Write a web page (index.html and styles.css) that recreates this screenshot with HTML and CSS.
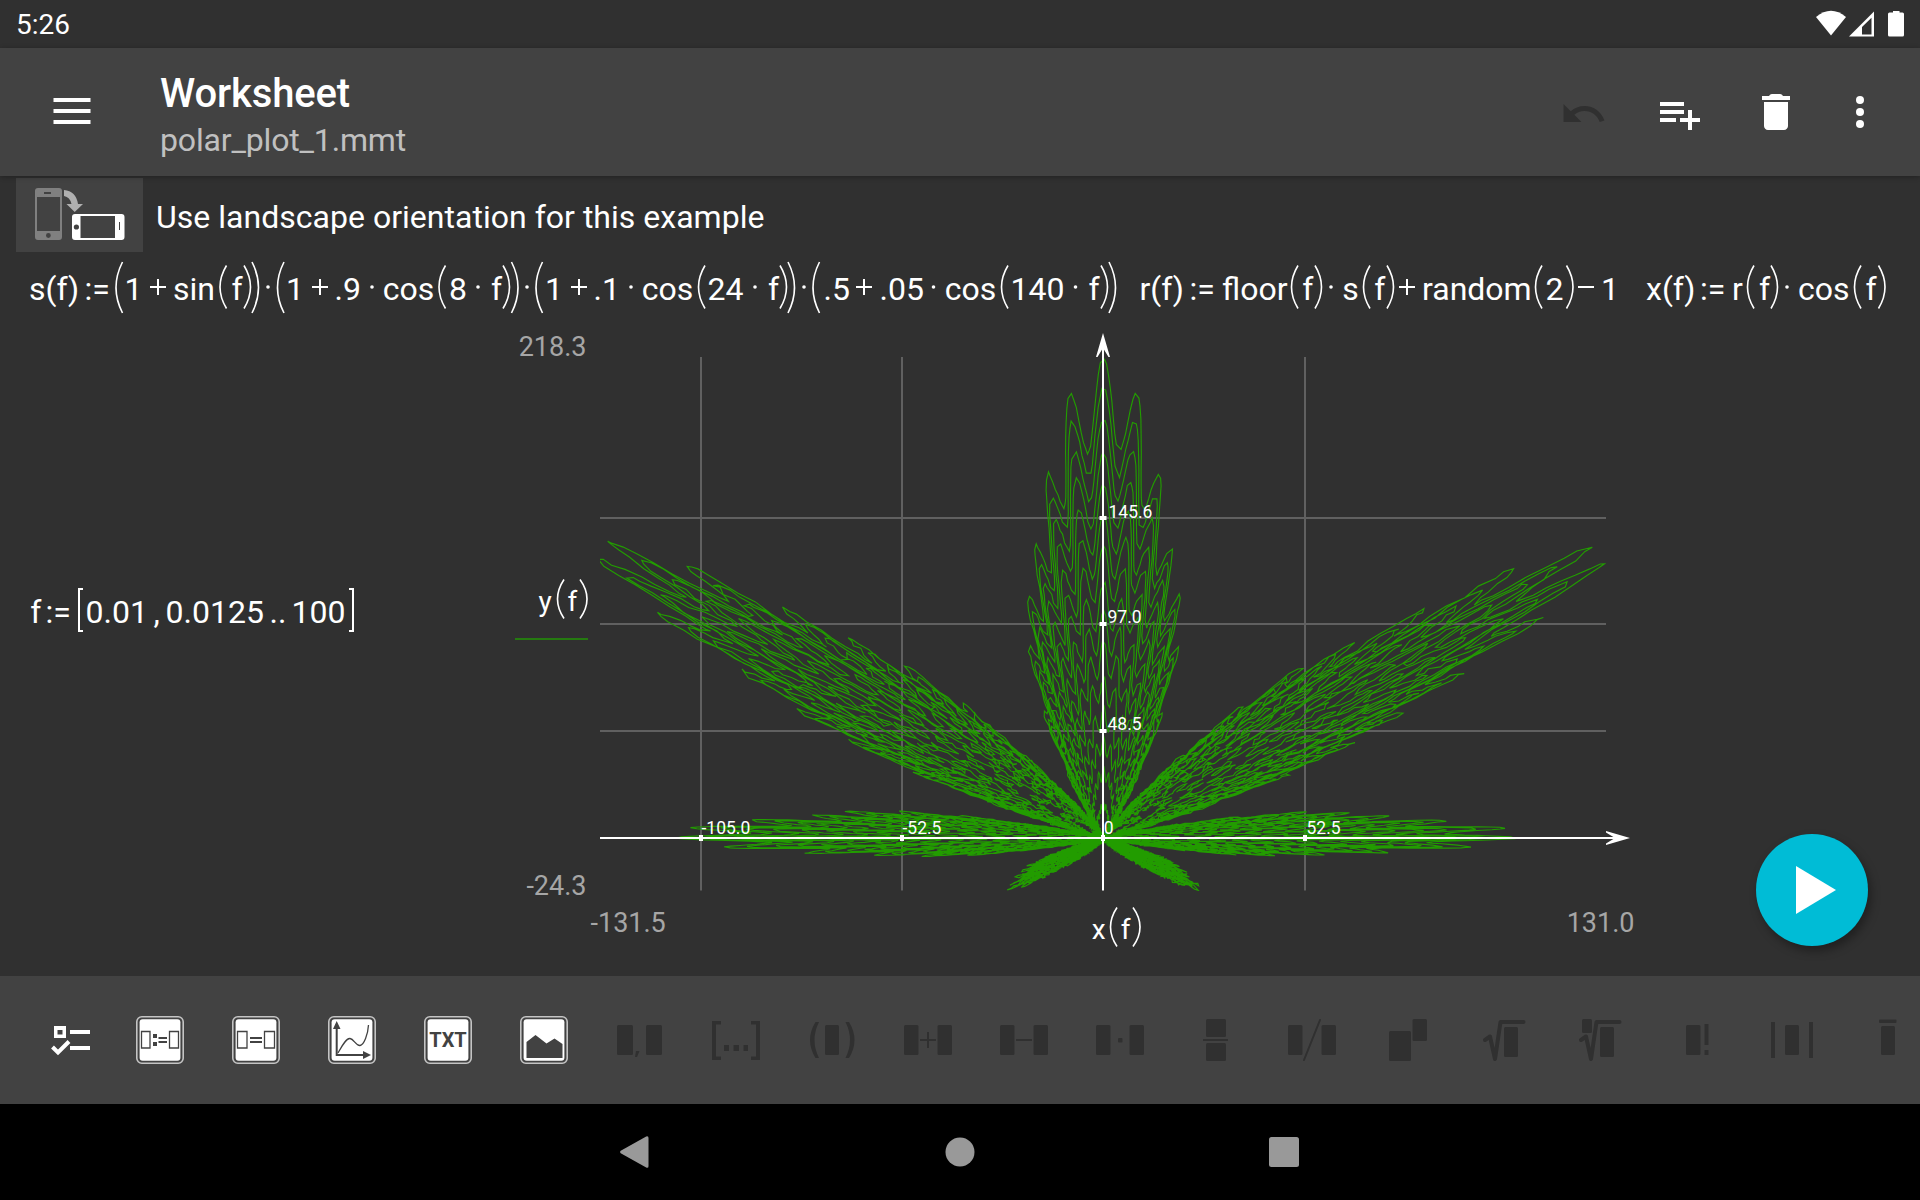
FILE: index.html
```
<!DOCTYPE html>
<html lang="en">
<head>
<meta charset="utf-8">
<title>Worksheet</title>
<link rel="stylesheet" href="styles.css">
</head>
<body>
<div class="screen">
  <div class="status-bar">
    <span class="clock">5:26</span>
    <svg class="status-icons" viewBox="0 0 90 28" width="90" height="28">
      <path d="M0 7Q15-5.500 30 7L15 25.500z"/>
      <path d="M33 26.500L58 1.500V26.500zM46 24.500H55.500V7.800L46 17z" fill-rule="evenodd"/>
      <path d="M74 2.500H77V1H83.500V2.500H86.500Q88 2.500 88 4V25Q88 26.500 86.500 26.500H73.500Q72 26.500 72 25V4Q72 2.500 73.500 2.500z"/>
    </svg>
  </div>

  <header class="app-bar">
    <svg class="menu-icon" viewBox="0 0 38 26" width="38" height="26"><path d="M.500 0h37v4h-37zM.500 11h37v4h-37zM.500 22h37v4h-37z"/></svg>
    <div class="titles">
      <h1 class="title">Worksheet</h1>
      <div class="subtitle">polar_plot_1.mmt</div>
    </div>
    <svg class="actions" viewBox="1550 48 370 128" width="370" height="128">
      <path class="disabled" transform="translate(1559.500 90) scale(2)" d="M12.5 8c-2.650 0-5.050.990-6.900 2.600L2 7v9h9l-3.620-3.620c1.390-1.160 3.160-1.880 5.120-1.880 3.540 0 6.550 2.310 7.600 5.500l2.370-.780C21.080 11.030 17.150 8 12.500 8z"/>
      <path transform="translate(1656 90) scale(2)" d="M14 10H2v2h12v-2zm0-4H2v2h12V6zm4 8v-4h-2v4h-4v2h4v4h2v-4h4v-2h-4zM2 16h8v-2H2v2z"/>
      <path transform="translate(1752 88) scale(2)" d="M6 19c0 1.100.900 2 2 2h8c1.100 0 2-.900 2-2V7H6v12zM19 4h-3.500l-.500-.600Q14.600 3 14 3h-4Q9.400 3 9 3.400L8.500 4H5v2h14V4z"/>
      <circle cx="1860" cy="100" r="4"/><circle cx="1860" cy="112" r="4"/><circle cx="1860" cy="124" r="4"/>
    </svg>
  </header>

  <main class="sheet">
    <div class="note">
      <svg class="note-image" viewBox="16 178 127 74" width="127" height="74">
        <path fill="#808080" fill-rule="evenodd" d="M38 188h21q3 0 3 3v46q0 3-3 3H38q-3 0-3-3v-46q0-3 3-3zM37 197v34h23v-34zM44 192v2h7v-2zM46 235.500a2.400 2.400 0 1 0 4.800 0a2.400 2.400 0 1 0-4.800 0z"/>
        <path fill="#b0b0b0" d="M64 190Q76 191 78 204H83L74.700 212L66.500 204H71.500Q70 197 64 196z"/>
        <path fill="#fff" fill-rule="evenodd" d="M75 214h46.500q3 0 3 3v20q0 3-3 3H75q-3 0-3-3v-20q0-3 3-3zM80.500 216v22H115v-22zM119 222v8h1v-8zM73.800 227a2.600 2.600 0 1 0 5.200 0a2.600 2.600 0 1 0-5.200 0z"/>
      </svg>
      <span class="note-text">Use landscape orientation for this example</span>
    </div>

    <svg class="formula" viewBox="0 252 1920 76" width="1920" height="76">
      <defs>
        <path id="lp" d="M7 0Q-6 21.500 7 43"/>
        <path id="rp" d="M0 0Q13 21.500 0 43"/>
        <path id="lb" d="M7 0Q-6 25.500 7 51"/>
        <path id="rb" d="M0 0Q13 25.500 0 51"/>
        <path id="plus" d="M-8 0H8M0-8V8"/>
        <circle id="dot" r="1.800"/>
      </defs>
      <text class="math" y="299.500"><tspan x="29">s(f)</tspan><tspan x="84.500">:=</tspan><tspan x="124.500">1</tspan><tspan x="173">sin</tspan><tspan x="231.500">f</tspan><tspan x="286">1</tspan><tspan x="334.500">.9</tspan><tspan x="382.800">cos</tspan><tspan x="449">8</tspan><tspan x="491">f</tspan><tspan x="545">1</tspan><tspan x="593.500">.1</tspan><tspan x="641.800">cos</tspan><tspan x="707.500">24</tspan><tspan x="768">f</tspan><tspan x="823.500">.5</tspan><tspan x="879.500">.05</tspan><tspan x="944.800">cos</tspan><tspan x="1010.500">140</tspan><tspan x="1088.500">f</tspan></text>
      <text class="math" y="299.500"><tspan x="1139.500">r(f)</tspan><tspan x="1189.500">:=</tspan><tspan x="1222">floor</tspan><tspan x="1302.300">f</tspan><tspan x="1342.300">s</tspan><tspan x="1374.200">f</tspan><tspan x="1422">random</tspan><tspan x="1545.500">2</tspan><tspan x="1601">1</tspan></text>
      <text class="math" y="299.500"><tspan x="1646">x(f)</tspan><tspan x="1700">:=</tspan><tspan x="1732">r</tspan><tspan x="1759">f</tspan><tspan x="1798">cos</tspan><tspan x="1865.500">f</tspan></text>
      <g class="strokes">
        <use href="#lb" x="115.500" y="262"/><use href="#rb" x="252" y="262"/><use href="#lb" x="277" y="262"/><use href="#rb" x="511.500" y="262"/><use href="#lb" x="535.500" y="262"/><use href="#rb" x="788" y="262"/><use href="#lb" x="812.500" y="262"/><use href="#rb" x="1109" y="262"/>
        <use href="#lp" x="219.500" y="265.500"/><use href="#rp" x="244" y="265.500"/><use href="#lp" x="438.500" y="265.500"/><use href="#rp" x="503" y="265.500"/><use href="#lp" x="698" y="265.500"/><use href="#rp" x="780" y="265.500"/><use href="#lp" x="1001" y="265.500"/><use href="#rp" x="1101" y="265.500"/>
        <use href="#lp" x="1291" y="265.500"/><use href="#rp" x="1315" y="265.500"/><use href="#lp" x="1363" y="265.500"/><use href="#rp" x="1387" y="265.500"/><use href="#lp" x="1535" y="265.500"/><use href="#rp" x="1566.500" y="265.500"/>
        <use href="#lp" x="1747" y="265.500"/><use href="#rp" x="1771" y="265.500"/><use href="#lp" x="1854" y="265.500"/><use href="#rp" x="1878.500" y="265.500"/>
      </g>
      <g class="strokes operators">
        <use href="#plus" x="158" y="287"/><use href="#plus" x="320" y="287"/><use href="#plus" x="579" y="287"/><use href="#plus" x="864" y="287"/><use href="#plus" x="1407" y="287"/><path d="M1578 287h16"/>
      </g>
      <g class="dots">
        <use href="#dot" x="268" y="287"/><use href="#dot" x="372" y="287"/><use href="#dot" x="478" y="287"/><use href="#dot" x="527" y="287"/><use href="#dot" x="631" y="287"/><use href="#dot" x="755" y="287"/><use href="#dot" x="804" y="287"/><use href="#dot" x="933.500" y="287"/><use href="#dot" x="1075.500" y="287"/><use href="#dot" x="1331" y="287"/><use href="#dot" x="1787" y="287"/>
      </g>
    </svg>

    <div class="plot-row">
      <svg class="interval" viewBox="0 580 500 60" width="500" height="60">
        <text class="math" y="622.500"><tspan x="30.300">f</tspan><tspan x="45.500">:=</tspan><tspan x="85.500">0.01</tspan><tspan x="153.500">,</tspan><tspan x="165.500">0.0125</tspan><tspan x="269.500">..</tspan><tspan x="291.500">100</tspan></text>
        <path class="strokes operators" d="M83 589H79V631H83M349 589H353V631H349"/>
      </svg>
      <svg class="plot" viewBox="500 328 1160 648" width="1160" height="648">
        <g class="grid"><path d="M701 357V890.500M902 357V890.500M1305 357V890.500M600 518H1606M600 624H1606M600 731H1606"/></g>
        <clipPath id="area"><rect x="600" y="356" width="1006.500" height="535"/></clipPath>
        <path id="curve" class="curve" clip-path="url(#area)"/>
        <path class="axis" d="M1103 345V890.500M600 838H1618"/>
        <path class="marks" d="M1099.500 518h7M1099.500 624h7M1099.500 731h7M701 835v6M902 835v6M1305 835v6M1103 835v6"/>
        <path class="arrow" d="M1103 333L1110 357H1108.500L1103 348L1097.500 357H1096zM1630 838L1606 831V832.500L1615 838L1606 843.500V845z"/>
        <g class="ticks">
          <text x="1108.500" y="517.500">145.6</text><text x="1107.500" y="623">97.0</text><text x="1107.500" y="730">48.5</text>
          <text x="1103.700" y="834">0</text><text x="701.500" y="834">-105.0</text><text x="902.500" y="834">-52.5</text><text x="1306.500" y="834">52.5</text>
        </g>
        <g class="limits">
          <text x="586.500" y="356" text-anchor="end">218.3</text><text x="586.500" y="895" text-anchor="end">-24.3</text>
          <text x="590.500" y="932">-131.5</text><text x="1634.500" y="932" text-anchor="end">131.0</text>
        </g>
        <text class="axis-name" y="611"><tspan x="538.500">y</tspan><tspan x="567.500">f</tspan></text>
        <text class="axis-name" y="938.500"><tspan x="1091.800">x</tspan><tspan x="1120.800">f</tspan></text>
        <path class="strokes" d="M564 579.500Q551 599 564 618.500M580 579.500Q594 599 580 618.500M1117 907.500Q1104 927 1117 946.500M1133 907.500Q1147 927 1133 946.500"/>
        <path class="legend" d="M515 639H588"/>
      </svg>
      <button class="fab" aria-label="Calculate"><svg viewBox="0 0 40 48" width="40" height="48"><path d="M0 0L40 24L0 48z"/></svg></button>
    </div>
  </main>

  <div class="toolbar">
    <svg class="tool" viewBox="40 1016 48 48"><path fill-rule="evenodd" d="M54 1026h12v12H54zM57.500 1030v4.500h5v-4.500zM70 1030h20v4H70zM70 1046h20v4H70z"/><path class="check" d="M52.500 1047L58 1052.500L69 1041.500"/></svg>
    <svg class="tool" viewBox="0 0 48 48"><rect class="frame" x=".800" y=".800" width="46.400" height="46.400" rx="5"/><rect x="3.600" y="3.200" width="40.800" height="41.600" rx="3"/><path class="ink-line" d="M5.500 15.500h8.500v16.500H5.500zM33.500 15.500h9v16.500h-9z"/><path class="ink" d="M17 18h4v4h-4zM17 26h4v4h-4zM22.500 21h8.500v2h-8.500zM22.500 25h8.500v2h-8.500z"/></svg>
    <svg class="tool" viewBox="0 0 48 48"><rect class="frame" x=".800" y=".800" width="46.400" height="46.400" rx="5"/><rect x="3.600" y="3.200" width="40.800" height="41.600" rx="3"/><path class="ink-line" d="M5.500 15.500h9.500v16.500H5.500zM32.500 15.500h10v16.500h-10z"/><path class="ink" d="M18 21h12v2H18zM18 25h12v2H18z"/></svg>
    <svg class="tool" viewBox="0 0 48 48"><rect class="frame" x=".800" y=".800" width="46.400" height="46.400" rx="5"/><rect x="3.600" y="3.200" width="40.800" height="41.600" rx="3"/><path class="ink" d="M8.700 5L12.500 13H9.700V38H35V35L43 39L35 43V40H7.700V13H5z"/><path class="ink-line" d="M10 37C14 30 18 22 22 22.500S28 30 32 29.500S40 18 40.500 9"/></svg>
    <svg class="tool" viewBox="0 0 48 48"><rect class="frame" x=".800" y=".800" width="46.400" height="46.400" rx="5"/><rect x="3.600" y="3.200" width="40.800" height="41.600" rx="3"/><text class="txt" x="24" y="31" text-anchor="middle">TXT</text></svg>
    <svg class="tool" viewBox="0 0 48 48"><rect class="frame" x=".800" y=".800" width="46.400" height="46.400" rx="5"/><rect x="3.600" y="3.200" width="40.800" height="41.600" rx="3"/><path class="ink" d="M6.500 26L15.500 19L26.500 27.500L34.500 22.500L42.500 28V42H6.500z"/></svg>
    <svg class="tool off" viewBox="616 1016 48 48"><rect x="617" y="1025" width="16" height="30" rx="1.500"/><rect x="646" y="1025" width="16" height="30" rx="1.500"/><path d="M636 1051h3.500l-2.500 6h-2z"/></svg>
    <svg class="tool off" viewBox="712 1016 48 48"><path d="M712 1021h9v3.500h-5v32h5v3.500h-9zM760 1021h-9v3.500h5v32h-5v3.500h9zM724 1045h5v6h-5zM733.500 1045h5.500v6h-5.500zM743.500 1045h4.500v6h-4.500z"/></svg>
    <svg class="tool off" viewBox="808 1016 48 48"><path d="M815.500 1022h3.500Q810 1040 819 1058h-3.500Q804.500 1040 815.500 1022zM849 1022h-3.500Q854.500 1040 845.500 1058h3.500Q860 1040 849 1022z"/><rect x="825" y="1025" width="14" height="30" rx="1.500"/></svg>
    <svg class="tool off" viewBox="904 1016 48 48"><rect x="904" y="1025" width="14.500" height="30" rx="1.500"/><rect x="937.500" y="1025" width="14.500" height="30" rx="1.500"/><path d="M920 1039h16v2h-16zM927 1032h2v16h-2z"/></svg>
    <svg class="tool off" viewBox="1000 1016 48 48"><rect x="1000" y="1025" width="14.500" height="30" rx="1.500"/><rect x="1033.500" y="1025" width="14.500" height="30" rx="1.500"/><path d="M1016 1039h16v2h-16z"/></svg>
    <svg class="tool off" viewBox="1096 1016 48 48"><rect x="1096" y="1025" width="14.500" height="30" rx="1.500"/><rect x="1129.500" y="1025" width="14.500" height="30" rx="1.500"/><rect x="1118" y="1038" width="4.500" height="4.500" rx="1"/></svg>
    <svg class="tool off" viewBox="1192 1016 48 48"><rect x="1206" y="1019" width="20" height="18" rx="1.500"/><rect x="1206" y="1043" width="20" height="18" rx="1.500"/><path d="M1203 1039h25v2h-25z"/></svg>
    <svg class="tool off" viewBox="1288 1016 48 48"><rect x="1288" y="1025" width="14.500" height="30" rx="1.500"/><rect x="1321.500" y="1025" width="14.500" height="30" rx="1.500"/><path class="off-line thin" d="M1304 1060L1320 1020"/></svg>
    <svg class="tool off" viewBox="1384 1016 48 48"><rect x="1389" y="1031" width="22" height="30" rx="1.500"/><rect x="1412.500" y="1019" width="14.500" height="22" rx="1.500"/></svg>
    <svg class="tool off" viewBox="1480 1016 48 48"><path class="off-line" d="M1485 1040L1490 1036.500L1495 1059L1500.500 1022H1523.500"/><rect x="1504" y="1027" width="14" height="30" rx="1.500"/></svg>
    <svg class="tool off" viewBox="1576 1016 48 48"><path class="off-line" d="M1581 1040L1586 1036.500L1591 1059L1596.500 1022H1619.500"/><rect x="1600" y="1027" width="14" height="30" rx="1.500"/><rect x="1582" y="1019" width="10" height="14" rx="1.500"/></svg>
    <svg class="tool off" viewBox="1672 1016 48 48"><rect x="1686" y="1025" width="14.500" height="30" rx="1.500"/><path d="M1704.500 1024h4v21h-4zM1704.500 1050h4v5h-4z"/></svg>
    <svg class="tool off" viewBox="1768 1016 48 48"><rect x="1785" y="1025" width="14" height="30" rx="1.500"/><path d="M1771 1022h4v36h-4zM1809 1022h4v36h-4z"/></svg>
    <svg class="tool off" viewBox="1864 1016 48 48"><rect x="1881" y="1026" width="14" height="29" rx="1.500"/><rect x="1879" y="1019.500" width="17.500" height="3.500" rx="1"/></svg>
  </div>

  <nav class="nav-bar">
    <svg viewBox="0 0 32 32" width="32" height="32"><path d="M.700 14.800L26.200.400Q28.500-.500 28.500 2V30Q28.500 32.500 26.200 31.600L.700 17.200Q-.800 16 .700 14.800z"/></svg>
    <svg viewBox="0 0 32 32" width="32" height="32"><circle cx="16" cy="16" r="14.500"/></svg>
    <svg viewBox="0 0 32 32" width="32" height="32"><rect x="1" y="1" width="30" height="30" rx="2.500"/></svg>
  </nav>
</div>
<script src="plot.js"></script>
</body>
</html>
```

FILE: plot.js
```
// Traces the polar function r(f) over the interval f = 0.01, 0.0125 .. 100.
(function () {
  var seed = 12345;
  function random(max) {
    seed = (seed * 1103515245 + 12345) % 2147483648;
    return seed / 2147483648 * max;
  }
  function r(f) {
    var s = (1 + Math.sin(f)) * (1 + 0.9 * Math.cos(8 * f)) *
            (1 + 0.1 * Math.cos(24 * f)) * (0.5 + 0.05 * Math.cos(140 * f));
    return Math.floor(f) * s + 0.75 * (random(2) - 1);
  }
  var d = [], px = 0, py = 0;
  for (var i = 0; i <= 39996; i++) {
    var f = 0.01 + i * 0.0025;
    var x = 1103.5 + r(f) * Math.cos(f) * 3.832;
    var y = 838 - r(f) * Math.sin(f) * 2.2;
    // Points close to the last one are skipped; near the origin more are kept.
    var near = Math.hypot(x - 1103.5, y - 838);
    if (i && Math.hypot(x - px, y - py) < Math.min(4, 0.8 + near / 60)) continue;
    d.push(x.toFixed(1) + ' ' + y.toFixed(1));
    px = x;
    py = y;
  }
  document.getElementById('curve').setAttribute('d', 'M' + d.join('L'));
})();
```

FILE: styles.css
```
* { box-sizing: border-box; }
body { margin: 0; background: #303030; font-family: Roboto, "Liberation Sans", sans-serif; color: #fff; }
svg { display: block; fill: #fff; flex: none; }
.screen { width: 1920px; height: 1200px; display: flex; flex-direction: column; overflow: hidden; }

.status-bar { height: 48px; display: flex; justify-content: space-between; align-items: center; padding: 0 14px 0 16px; }
.clock { font-size: 28px; line-height: 48px; padding-top: 2px; }

.app-bar { height: 128px; background: #424242; display: flex; align-items: center; padding-left: 53px; box-shadow: 0 1px 5px rgba(0, 0, 0, .3); z-index: 1; flex: none; }
.menu-icon { margin-bottom: 2px; }
.titles { margin-left: 69px; padding-top: 4px; flex: 1; }
.title { margin: 0; font-size: 40px; line-height: 47px; font-weight: 500; letter-spacing: -.15px; }
.subtitle { font-size: 32px; line-height: 38px; margin-top: 4px; color: #c0c0c0; letter-spacing: -.16px; }
.disabled { fill: #303030; }

.sheet { height: 800px; padding-top: 2px; }
.note { height: 74px; display: flex; padding-left: 16px; }
.note-image { background: #424242; }
.note-text { font-size: 32px; line-height: 78px; margin-left: 13px; letter-spacing: .02px; }
.math { font-size: 32px; }
.strokes { fill: none; stroke: #fff; stroke-width: 1.6; }
.operators { stroke-width: 2; }

.plot-row { display: flex; height: 648px; }
.interval { margin-top: 252px; }
.grid { fill: none; stroke: #606060; stroke-width: 2; }
.curve { fill: none; stroke: #229c00; stroke-width: 1.15; }
.axis, .marks { fill: none; stroke: #fff; stroke-width: 2; }
.marks { stroke-width: 4; }
.ticks { font-size: 17.5px; }
.limits { font-size: 27px; fill: #a6a6a6; }
.axis-name { font-size: 28px; }
.legend { stroke: #257a10; stroke-width: 2; }
.fab { width: 112px; height: 112px; margin: 506px 0 0 96px; padding: 0 0 0 8px; border: 0; border-radius: 50%; background: #00bcd6; display: flex; align-items: center; justify-content: center; box-shadow: 3px 5px 10px rgba(0, 0, 0, .35); }

.toolbar { height: 128px; background: #424242; display: flex; align-items: center; gap: 48px; padding-left: 40px; flex: none; overflow: hidden; }
.tool { width: 48px; height: 48px; overflow: visible; }
.frame { fill: none; stroke: #c4c4c4; stroke-width: 1.6; }
.ink, .txt { fill: #424242; }
.ink-line { fill: none; stroke: #424242; stroke-width: 1.3; }
.txt { font-size: 20px; font-weight: 700; }
.check { fill: none; stroke: #fff; stroke-width: 4; }
.off { fill: #303030; }
.off-line { fill: none; stroke: #303030; stroke-width: 4; stroke-linecap: round; stroke-linejoin: round; }
.thin { stroke-width: 2; }

.nav-bar { height: 96px; background: #000; display: flex; justify-content: center; align-items: center; gap: 292px; flex: none; }
.nav-bar svg { fill: #999; overflow: visible; }
```
